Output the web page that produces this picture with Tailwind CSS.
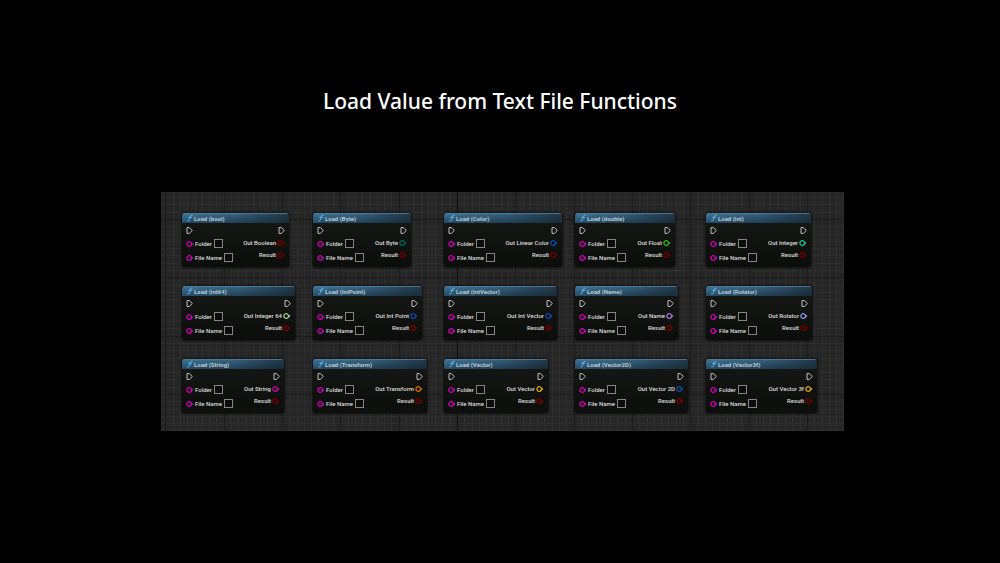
<!DOCTYPE html>
<html lang="en">
<head>
<meta charset="utf-8">
<title>Load Value from Text File Functions</title>
<script src="https://cdn.jsdelivr.net/npm/@tailwindcss/browser@4"></script>
</head>
<body class="min-h-screen bg-black font-['Roboto',sans-serif] text-white">
<main class="flex flex-col items-center pt-[85px]">
  <h1 class="whitespace-nowrap font-['Noto_Sans',sans-serif] text-[21px] leading-8 font-medium">Load Value from Text File Functions</h1>
  <section class="relative mt-[75px] ml-[5px] overflow-hidden bg-[#262626] pt-[21px] pr-[7px] pb-[18px] pl-[21px]" aria-label="Blueprint graph">
    <svg id="lines" class="absolute inset-0 size-full" aria-hidden="true"></svg>
    <div id="nodes" class="relative grid grid-cols-[repeat(5,131px)] gap-y-[19px]"></div>
  </section>
</main>

<svg class="hidden">
  <symbol id="exec" viewBox="0 0 7 7"><path d="M1 .6H3.4L6.3 3.5 3.4 6.4H1Z" fill="none" stroke="#d4d4d4" stroke-width=".9" stroke-linejoin="round"/></symbol>
  <symbol id="pin" viewBox="0 0 8 6"><circle cx="3.2" cy="3" r="2.3" fill="#080808" stroke="currentColor" stroke-width="1.3"/><path d="M6 1.7L7.5 3 6 4.3Z" fill="currentColor"/></symbol>
  <symbol id="fn" viewBox="0 0 6 8"><path d="M5.2 1.3C4 .7 3.5 1.4 3.2 2.8L2.5 5.6C2.2 6.8 1.6 7.3.6 6.8M1.7 3.3H4.6" fill="none" stroke="#62b4e6" stroke-width="1" stroke-linecap="round"/></symbol>
</svg>

<template id="node">
  <article class="h-[54px] overflow-hidden rounded-[3px] bg-linear-to-b from-[#161816] to-[#0b0e0b] text-[6px] leading-[9px] font-medium text-[#dcdcdc] shadow-[0_0_2px_1px_#0009]">
    <header class="bg-linear-to-r from-[#3c7397] via-[#34617f] to-[#213745]">
      <div class="flex h-[10px] items-center border-t border-[#5f92b0]/70 bg-linear-to-b from-transparent to-[#10202c]/50 pb-px pl-[5px]">
        <svg class="mr-px h-[8px] w-[6px]" aria-hidden="true"><use href="#fn"/></svg>
        <h2 class="font-bold text-[#bccad2]" data-title></h2>
      </div>
    </header>
    <div class="flex justify-between px-[4px] pt-[4px]">
      <svg class="size-[7px]"><use href="#exec"/></svg>
      <svg class="size-[7px]"><use href="#exec"/></svg>
    </div>
    <div class="flex justify-between px-[4px] whitespace-nowrap">
      <div class="flex flex-col gap-[5px] pt-[5px]">
        <label class="flex h-[9px] items-center"><svg class="mr-px h-[6px] w-[8px] text-[#d400b4]"><use href="#pin"/></svg>Folder<input type="text" class="ml-[2px] size-[9px] border border-[#858585] bg-[#0b0d0b]"></label>
        <label class="flex h-[9px] items-center"><svg class="mr-px h-[6px] w-[8px] text-[#d400b4]"><use href="#pin"/></svg>File Name<input type="text" class="ml-[2px] size-[9px] border border-[#858585] bg-[#0b0d0b]"></label>
      </div>
      <div class="flex flex-col items-end gap-[3px] pt-[4px]">
        <div class="flex h-[9px] items-center gap-px"><span data-out></span><svg class="h-[6px] w-[8px]" data-pin><use href="#pin"/></svg></div>
        <div class="flex h-[9px] items-center gap-px">Result<svg class="h-[6px] w-[8px] text-[#7c0000]"><use href="#pin"/></svg></div>
      </div>
    </div>
  </article>
</template>

<script>
const nodes = [
  ['bool', 'Boolean', 107, '#7c0000'], ['Byte', 'Byte', 98, '#00685c'], ['Color', 'Linear Color', 118, '#0b4eb4'], ['double', 'Float', 100, '#34b914'], ['int', 'Integer', 105, '#1bc490'],
  ['int64', 'Integer 64', 113, '#94ca94'], ['IntPoint', 'Int Point', 109, '#0b4eb4'], ['IntVector', 'Int Vector', 113, '#0b4eb4'], ['Name', 'Name', 103, '#a878dc'], ['Rotator', 'Rotator', 106, '#8798e4'],
  ['String', 'String', 102, '#d400b4'], ['Transform', 'Transform', 114, '#e06a00'], ['Vector', 'Vector', 104, '#dca914'], ['Vector2D', 'Vector 2D', 113, '#0b4eb4'], ['Vector3f', 'Vector 3f', 111, '#dca914'],
];
const grid = document.getElementById('nodes');
for (const [type, out, width, color] of nodes) {
  const n = document.getElementById('node').content.cloneNode(true);
  n.querySelector('[data-title]').textContent = `Load (${type})`;
  n.querySelector('[data-out]').textContent = `Out ${out}`;
  n.querySelector('[data-pin]').style.color = color;
  n.querySelector('article').style.width = width + 'px';
  grid.append(n);
}
// Graph paper: a fine line every step, a darker one every eight, the origin darkest.
const step = 7.29;
let s = '';
for (const major of [0, 1]) {
  for (let i = -41; i <= 53; i++) {
    if ((i % 8 === 0) !== !!major) continue;
    const c = major ? (i === 0 ? '#0c0c0c' : '#1c1c1c') : '#2e2e2e';
    const x = Math.round(296 + i * step) + .5;
    s += `<path d="M${x} 0V600" stroke="${c}"/>`;
  }
  for (let i = -4; i <= 30; i++) {
    if ((i % 8 === 0) !== !!major) continue;
    const y = Math.round(27 + i * step) + .5;
    s += `<path d="M0 ${y}H1600" stroke="${major ? '#1c1c1c' : '#2e2e2e'}"/>`;
  }
}
document.getElementById('lines').innerHTML = s;
</script>
</body>
</html>
